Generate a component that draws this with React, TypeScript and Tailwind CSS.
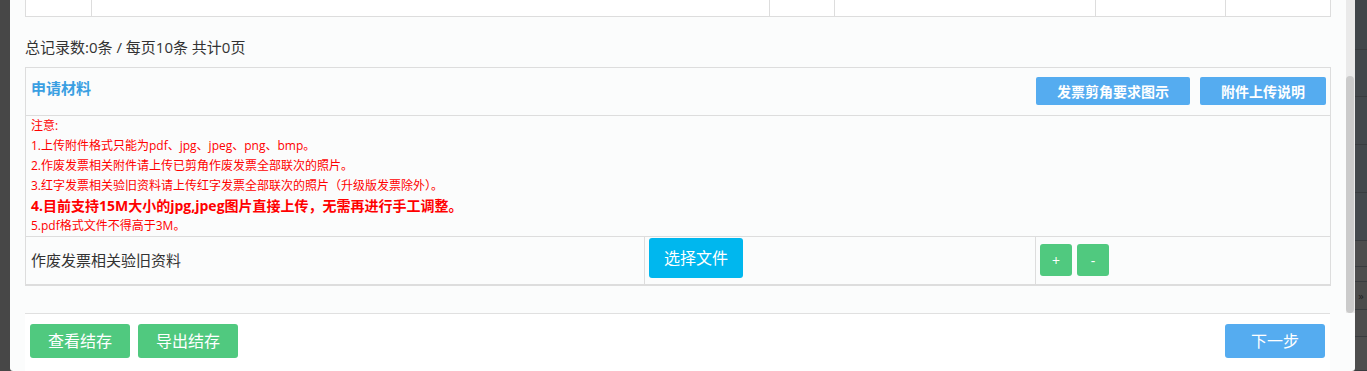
const topCols = [66, 678, 65, 261, 130, 106];

const notes = [
  "1.上传附件格式只能为pdf、jpg、jpeg、png、bmp。",
  "2.作废发票相关附件请上传已剪角作废发票全部联次的照片。",
  "3.红字发票相关验旧资料请上传红字发票全部联次的照片（升级版发票除外）。",
];

const stripRows = [
  { h: 50, c: "bg-[#41464a]" },
  { h: 47, c: "bg-[#42474b]" },
  { h: 48, c: "bg-[#43484c]" },
  { h: 48, c: "bg-[#43484c]" },
  { h: 48, c: "bg-[#44494d]" },
  { h: 26, c: "bg-[#4d4d4d]" },
  { h: 15, c: "bg-[#4d4d4d]" },
  { h: 28, c: "bg-[#4b4b4b]", mark: true },
  { h: 27, c: "bg-[#4d4d4d]" },
  { h: 34, c: "bg-[#4e4e4e]" },
];

export default function App() {
  return (
    <div className="flex h-[371px] w-[1367px] overflow-hidden bg-[#474747] font-['Open_Sans','Noto_Sans_CJK_SC',sans-serif] text-[#333]">
      <div className="w-[10px] shrink-0 bg-[#474747]" />

      <div className="flex w-[1345px] shrink-0 flex-col overflow-hidden rounded-b-[3px] bg-[#fbfcfc]">
        {/* scrolling body */}
        <div className="flex h-[313px] shrink-0">
          <div className="w-[1336px] shrink-0 px-[15px]">
            {/* tail of the record table */}
            <div className="flex h-[17px] border-x border-b border-[#dddddd] bg-white">
              {topCols.map((w, i) => (
                <div
                  key={i}
                  style={{ width: w }}
                  className={i < topCols.length - 1 ? "shrink-0 border-r border-[#dddddd]" : "flex-1"}
                />
              ))}
            </div>

            <div className="mt-[20px] mb-[10px] h-[20px] text-[15px] leading-[20px]">
              总记录数:0条 / 每页10条 共计0页
            </div>

            {/* 申请材料 */}
            <div className="border border-b-2 border-[#dddddd]">
              <div className="flex h-[47px] items-start justify-between pl-[5px] pr-[4px]">
                <span className="pt-[10px] text-[15px] font-bold leading-[20px] text-[#3a9fe2]">申请材料</span>
                <div className="flex gap-[10px] pt-[9px]">
                  <button className="h-[28px] w-[154px] rounded-[2px] bg-[#55acf0] text-[14px] font-bold text-white">
                    发票剪角要求图示
                  </button>
                  <button className="h-[28px] w-[126px] rounded-[2px] bg-[#55acf0] text-[14px] font-bold text-white">
                    附件上传说明
                  </button>
                </div>
              </div>

              <div className="border-t border-[#dddddd] pl-[5px] text-[12px] leading-[20px] text-[#ff0000]">
                <div>注意:</div>
                {notes.map((n) => (
                  <div key={n}>{n}</div>
                ))}
                <div className="text-[14px] font-bold">
                  4.目前支持15M大小的jpg,jpeg图片直接上传，无需再进行手工调整。
                </div>
                <div>5.pdf格式文件不得高于3M。</div>
              </div>

              <div className="flex h-[48px] border-t border-[#dddddd]">
                <div className="flex w-[619px] shrink-0 items-center border-r border-[#dddddd] pl-[5px] text-[15px]">
                  作废发票相关验旧资料
                </div>
                <div className="w-[391px] shrink-0 border-r border-[#dddddd] pl-[4px] pt-[1px]">
                  <button className="h-[40px] w-[94px] rounded-[3px] bg-[#00b7ee] text-[16px] text-white">选择文件</button>
                </div>
                <div className="flex flex-1 gap-[5px] pl-[4px] pt-[7px]">
                  <button className="h-[32px] w-[32px] rounded-[3px] bg-[#50c97f] text-[14px] text-white">+</button>
                  <button className="h-[32px] w-[32px] rounded-[3px] bg-[#50c97f] text-[14px] text-white">-</button>
                </div>
              </div>
            </div>
          </div>

          {/* scrollbar */}
          <div className="flex w-[9px] shrink-0 flex-col bg-[#eaeaea]">
            <div className="h-[76px]" />
            <div className="w-[8px] flex-1 rounded-full bg-[#cbcbcb]" />
          </div>
        </div>

        {/* footer */}
        <div className="ml-[15px] mr-[25px] flex flex-1 items-start justify-between border-t border-[#e0e0e0] bg-white px-[5px] pt-[10px]">
          <div className="flex gap-[8px]">
            <button className="h-[34px] w-[100px] rounded-[3px] bg-[#50c97f] text-[16px] text-white">查看结存</button>
            <button className="h-[34px] w-[100px] rounded-[3px] bg-[#50c97f] text-[16px] text-white">导出结存</button>
          </div>
          <button className="h-[34px] w-[100px] rounded-[3px] bg-[#55acf0] text-[16px] text-white">下一步</button>
        </div>
      </div>

      {/* page behind the dialog */}
      <div className="flex w-[12px] shrink-0 flex-col">
        {stripRows.map((r, i) => (
          <div
            key={i}
            style={{ height: r.h }}
            className={`flex shrink-0 items-center justify-center border-b border-[#393c3f] ${r.c}`}
          >
            {r.mark && <span className="text-[11px] leading-none text-[#222]">»</span>}
          </div>
        ))}
      </div>
    </div>
  );
}
